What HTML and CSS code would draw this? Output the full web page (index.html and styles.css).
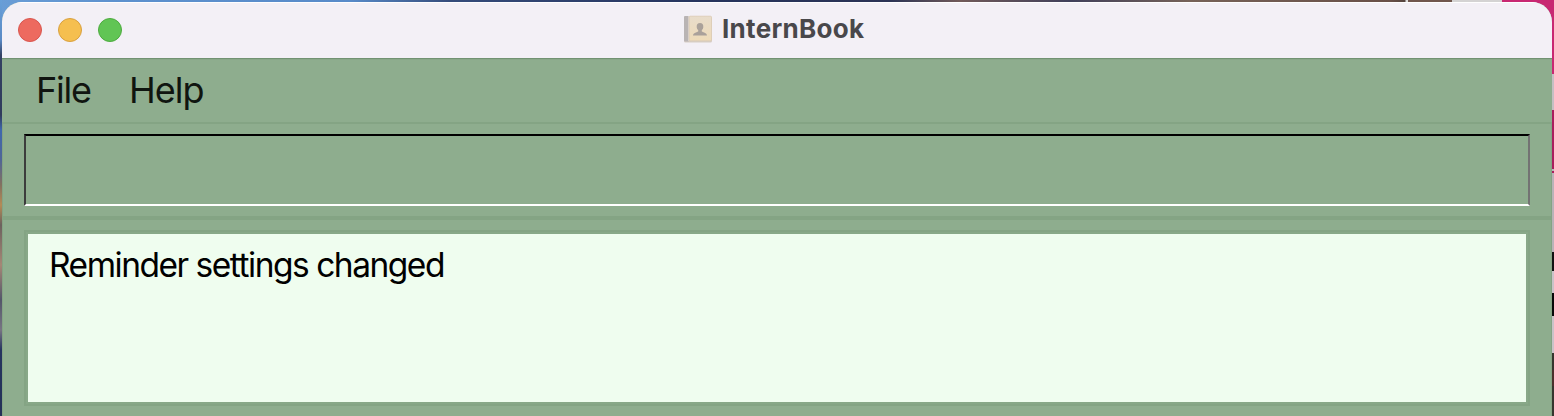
FILE: index.html
```html
<!DOCTYPE html>
<html lang="en">
<head>
<meta charset="utf-8">
<title>InternBook</title>
<link rel="stylesheet" href="styles.css">
</head>
<body>
<div class="desktop">
  <main class="window">
    <header class="titlebar">
      <div class="controls"><i class="control close"></i><i class="control minimize"></i><i class="control maximize"></i></div>
      <svg class="book" width="28" height="28" viewBox="0 0 28 28">
        <defs><linearGradient id="cover" x2="0" y2="1"><stop stop-color="#e8dccb"/><stop offset="1" stop-color="#eedbb8"/></linearGradient></defs>
        <rect x="0" y="1.5" width="28" height="26" rx="1.5" fill="#d7cdc4"/>
        <rect x="0" y="1" width="5" height="25.5" rx="1" fill="#b9b4b4"/>
        <rect x="4" y="1" width="1.2" height="25" fill="#d6d0cc"/>
        <rect x="5.2" y="1.2" width="22.3" height="24.6" rx="1" fill="url(#cover)" stroke="#ddcdb5" stroke-width=".8"/>
        <path d="M16 8c-2.300 0-3.500 1.600-3.300 3.900.1 1.500.7 2.500 1.500 3.200v1.400c-1.200.9-4.900 1.100-5.200 4.100h14c-.3-3-4-3.200-5.200-4.100v-1.400c.8-.7 1.400-1.700 1.500-3.200C19.500 9.600 18.300 8 16 8z" fill="#aaa19a"/>
      </svg>
      <h1 class="title">InternBook</h1>
    </header>
    <nav class="menu"><span class="file">File</span><span class="help">Help</span></nav>
    <section class="command"><div class="field"></div></section>
    <section class="result"><div class="message"><span class="message-text">Reminder settings changed</span></div></section>
  </main>
</div>
</body>
</html>
```
FILE: styles.css
```css
* { box-sizing: border-box; }
body { margin: 0; font-family: Inter, "Liberation Sans", sans-serif; overflow: hidden; }
.desktop {
  width: 1554px; height: 416px; padding: 2px 2px 0;
  background:
    linear-gradient(#c82872 0 74px, #c5bfc3 74px 110px, #a91e5d 110px 169px, #bcb6ba 169px 171px, #a91e5d 171px 173px, #b9b3b8 173px 252px, #111 252px 271px, #c9c3c8 271px 293px, #080808 293px 316px, #c9c3c8 316px 353px, #35352d 353px 370px, #4b302b 370px 386px, #35352d 386px) right 0 top 0 / 2px 416px no-repeat,
    linear-gradient(#c82872, #c82872) right 0 top 0 / 52px 24px no-repeat,
    linear-gradient(#68a0d9 0, #5a8ac5 40px, #334163 55px, #303b5c 115px, #3f68ae 130px, #506596 160px, #83715f 185px, #b48b57 205px, #6c625e 225px, #a58776 265px, #53566a 300px, #777583 330px, #26345f 350px, #243158) 0 0 / 2px 416px no-repeat,
    linear-gradient(90deg, #699dd6 0, #5d91ce 120px, #588bc9 350px, #354c7b 450px, #26345e 700px, #2b3355 890px, #715a59 960px, #40405b 1070px, #766258 1190px, #695048 1390px, #55443e 1405px, #ddd 1406px 1408px, #70564c 1408px 1452px, #d4d3d3 1452px 1502px, #c82872 1502px) 0 0 / 100% 24px no-repeat,
    #26345f;
}
.window { display: flex; flex-direction: column; width: 1550px; height: 414px; background: #8ead8e; border-radius: 20px 20px 0 0; overflow: hidden; }
.titlebar { display: flex; flex: 0 0 57px; align-items: flex-start; background: #f3f0f6; border-top: 1px solid #fff; border-bottom: 1px solid #719272; }
.controls { display: flex; gap: 16px; padding: 15px 0 0 16px; width: 682px; }
.control { width: 24px; height: 24px; border-radius: 50%; border: 1px solid; }
.close { background: #ed6a5f; border-color: #d8564f; }
.minimize { background: #f5bf4f; border-color: #d8a040; }
.maximize { background: #61c554; border-color: #4dab3f; }
.book { flex: none; margin-top: 12px; }
.title { margin: 9px 0 0 10px; font-size: 26px; line-height: 34px; font-weight: 700; color: #49484b; letter-spacing: .3px; }
.menu { display: flex; flex: 0 0 65px; padding: 8px 0 0 34px; border-top: 1px solid #89a889; border-bottom: 2px solid #84a484; color: #101510; font-size: 36px; line-height: 44px; }
.file { width: 93px; letter-spacing: -1.2px; }
.help { letter-spacing: -1px; }
.command { flex: 0 0 96px; padding: 10px 21px 0; border: solid #84a484; border-width: 0 1px 4px; }
.field { height: 72px; border: 2px solid; border-color: #000 #737373 #fff #3c3c3c; }
.result { flex: 1; padding: 10px 21px; border: solid #84a484; border-width: 0 1px; }
.message { height: 176px; border: 2px solid #84a484; background: #effdef; box-shadow: inset 0 0 0 2px #88a888; padding: 12px 0 0 23px; color: #000; font-size: 33.5px; line-height: 42px; }
.message-text { letter-spacing: -1.48px; }
```
